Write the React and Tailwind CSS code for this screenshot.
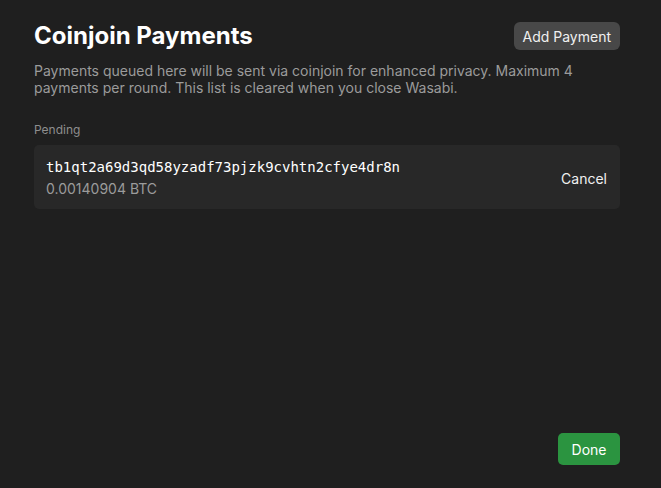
export default function App() {
  return (
    <div
      className="h-screen w-full bg-[#1f1f1f] text-white flex flex-col pl-[34px] pr-[41px] pt-[22px] pb-[23px]"
      style={{ fontFamily: 'Inter, "Noto Sans", sans-serif' }}
    >
      <div className="flex items-center justify-between h-[28px]">
        <h1 className="text-[24px] leading-[28px] font-bold">Coinjoin Payments</h1>
        <button className="h-[28px] px-[9px] rounded-[6px] bg-[#484848] text-[14px] text-[#f0f0f0]">
          Add Payment
        </button>
      </div>
      <p className="mt-[12px] text-[14px] leading-[17px] text-[#9b9b9b]">
        Payments queued here will be sent via coinjoin for enhanced privacy. Maximum 4 payments per round. This list is cleared when you close Wasabi.
      </p>
      <div className="mt-[26px] text-[12px] leading-[16px] text-[#8e8e8e]">Pending</div>
      <div className="mt-[7px] bg-[#282828] rounded-[5px] flex items-center justify-between pl-[12px] pr-[13px] pt-[12px] pb-[10px]">
        <div className="flex flex-col">
          <div
            className="text-[14px] leading-[20px] text-white"
            style={{ fontFamily: '"DejaVu Sans Mono", monospace' }}
          >
            tb1qt2a69d3qd58yzadf73pjzk9cvhtn2cfye4dr8n
          </div>
          <div className="mt-[2px] text-[14px] leading-[20px] text-[#9b9b9b]">0.00140904 BTC</div>
        </div>
        <button className="text-[14px] text-[#f0f0f0]">Cancel</button>
      </div>
      <div className="mt-auto flex justify-end">
        <button className="h-[32px] w-[62px] rounded-[5px] bg-[#2b9440] text-[14px] text-white">
          Done
        </button>
      </div>
    </div>
  );
}
